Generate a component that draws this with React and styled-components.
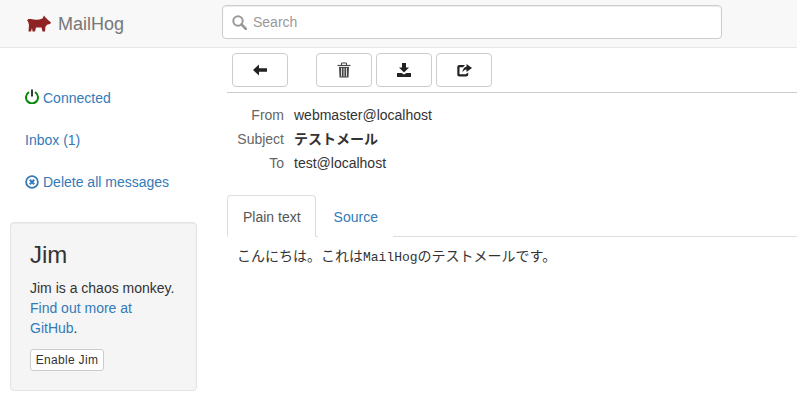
import React from 'react'
import styled, { createGlobalStyle } from 'styled-components'

const GlobalStyle = createGlobalStyle`
  html, body { margin:0; padding:0; background:#fff; }
  body {
    font-family:"Liberation Sans", Arial, "Noto Sans CJK JP", sans-serif;
    font-size:14px;
    line-height:20px;
    color:#333;
  }
  * { box-sizing:border-box; }
`

const Page = styled.div`
  width:797px;
  height:408px;
  overflow:hidden;
`
const Navbar = styled.div`
  height:48px;
  display:flex;
  align-items:center;
  background-color:#f8f8f8;
  border-bottom:1px solid #e7e7e7;
`
const Brand = styled.div`
  width:222px;
  padding-left:27px;
  display:flex;
  align-items:center;
  gap:7px;
  font-size:18px;
  color:#777;
`
const SearchBox = styled.div`
  width:500px;
  height:34px;
  margin-top:-3px;
  display:flex;
  align-items:center;
  gap:6px;
  padding-left:9px;
  background:#fff;
  border:1px solid #ccc;
  border-radius:4px;
  box-shadow:inset 0 1px 1px rgba(0,0,0,.075);
  color:#999;
`
const Columns = styled.div`
  display:flex;
`
const Sidebar = styled.div`
  width:227px;
  flex:none;
  padding:40px 30px 0 10px;
`
const NavList = styled.div`
  display:flex;
  flex-direction:column;
  gap:22px;
  padding-left:15px;
`
const NavLink = styled.a`
  display:flex;
  align-items:center;
  gap:4px;
  height:20px;
  color:#337ab7;
`
const Well = styled.div`
  width:187px;
  height:169px;
  margin-top:30px;
  padding:19px;
  background-color:#f5f5f5;
  border:1px solid #e3e3e3;
  border-radius:4px;
  box-shadow:inset 0 1px 1px rgba(0,0,0,.05);
`
const WellTitle = styled.div`
  font-size:24px;
  line-height:26px;
  margin:0 0 10px;
  color:#333;
`
const WellText = styled.div`
  margin-bottom:11px;
`
const Link = styled.a`
  color:#337ab7;
`
const SmallButton = styled.button`
  display:block;
  width:74px;
  height:22px;
  padding:0;
  font:12px/18px "Liberation Sans", Arial, sans-serif;
  letter-spacing:.3px;
  color:#333;
  background:#fff;
  border:1px solid #ccc;
  border-radius:3px;
`
const Main = styled.div`
  flex:1;
  min-width:0;
`
const Toolbar = styled.div`
  display:flex;
  height:45px;
  padding:5px 0 0 5px;
  border-bottom:1px solid #ccc;
`
const ToolButton = styled.button`
  width:56px;
  height:34px;
  margin-left:${props => props.gap}px;
  display:flex;
  align-items:center;
  justify-content:center;
  padding:0;
  background:#fff;
  border:1px solid #ccc;
  border-radius:4px;
`
const Headers = styled.div`
  padding-top:10px;
  display:grid;
  grid-template-columns:57px 1fr;
  column-gap:10px;
  grid-auto-rows:24px;
  align-items:center;
`
const Label = styled.div`
  text-align:right;
  color:#666;
`
const Value = styled.div`
  font-weight:${props => props.bold ? 'bold' : 'normal'};
`
const Tabs = styled.div`
  display:flex;
  height:42px;
  margin-top:20px;
  border-bottom:1px solid #ddd;
`
const Tab = styled.a`
  height:42px;
  padding:11px 14px 10px 15px;
  margin-right:2px;
  color:${props => props.active ? '#555' : '#337ab7'};
  background:#fff;
  border:1px solid ${props => props.active ? '#ddd' : 'transparent'};
  border-bottom-color:${props => props.active ? '#fff' : 'transparent'};
  border-radius:4px 4px 0 0;
`
const Body = styled.div`
  padding:9px 0 0 10px;
`
const Mono = styled.span`
  font-family:"Liberation Mono", "Courier New", monospace;
  font-size:13px;
`
const PowerSvg = styled.svg`
  margin:-3px 0 0 0;
`

const Hog = () => (
  <svg width="24" height="17" viewBox="0 0 24 17" fill="#8f2222">
    <path d="M0 5.5 L1.5 4 L4 4 C8 5 12 5 15.5 3.5 L17 0.5 L18.5 2.5 L20.5 4.5 L24 7.5 L23 9 L20.5 9.5 L18.5 11.5 L18 16.5 L15.5 16.5 L14.5 12.5 L9 12.5 L8 16.5 L5.5 16.5 L5 13 L4 16.5 L1.5 16.5 L2 10 L1 6.5 Z" />
  </svg>
)

const SearchIcon = () => (
  <svg width="15" height="15" viewBox="0 0 15 15" fill="none" stroke="#999" strokeWidth="2">
    <circle cx="6" cy="6" r="4.7" />
    <path d="M9.5 9.5 L14 14" strokeWidth="2.6" strokeLinecap="round" />
  </svg>
)

const PowerIcon = () => (
  <PowerSvg width="14" height="15" viewBox="0 0 14 15" fill="none" stroke="#0a8a0a" strokeWidth="2">
    <path d="M4 3.2 A6 6 0 1 0 10 3.2" />
    <path d="M7 0.5 V7.5" stroke="#222" strokeWidth="1.8" />
  </PowerSvg>
)

const RemoveIcon = () => (
  <svg width="14" height="14" viewBox="0 0 14 14">
    <circle cx="7" cy="7" r="5.9" fill="none" stroke="#337ab7" strokeWidth="1.8" />
    <path d="M4.8 4.8 L9.2 9.2 M9.2 4.8 L4.8 9.2" stroke="#337ab7" strokeWidth="2" />
  </svg>
)

const BackIcon = () => (
  <svg width="14" height="12" viewBox="0 0 14 12" fill="#222">
    <path d="M0 6 L6 0.5 L6 4.2 L14 4.2 L14 7.8 L6 7.8 L6 11.5 Z" />
  </svg>
)

const TrashIcon = () => (
  <svg width="14" height="16" viewBox="0 0 14 16">
    <path d="M4.5 3 V1 H9.5 V3" fill="none" stroke="#444" strokeWidth="1" />
    <path d="M0.5 3.5 H13.5" stroke="#444" strokeWidth="1.2" />
    <path d="M2 5 H12 L11.5 15.5 H2.5 Z" fill="#444" />
    <path d="M4.5 6 V14.5 M7 6 V14.5 M9.5 6 V14.5" stroke="#ddd" strokeWidth="1" />
  </svg>
)

const DownloadIcon = () => (
  <svg width="14" height="14" viewBox="0 0 14 14" fill="#222">
    <path d="M5 0 H9 V4.5 H12 L7 9.5 L2 4.5 H5 Z M0 10 H4.5 L7 11.5 L9.5 10 H14 V14 H0 Z" />
  </svg>
)

const ShareIcon = () => (
  <svg width="15" height="13" viewBox="0 0 15 13" fill="#222">
    <path d="M8 1 H2.5 C1 1 0.3 1.7 0.3 3.2 V10.3 C0.3 11.8 1 12.5 2.5 12.5 H9 C10.5 12.5 11.2 11.8 11.2 10.3 V8.5 L9 10 V10.3 H2.5 V3.2 H6 Z" />
    <path d="M9.5 0 L15 4 L9.5 8 V5.6 C7.8 5.6 6.4 6.6 5.5 8.5 C5.5 5.2 7.2 3 9.5 2.7 Z" />
  </svg>
)

export default function App() {
  return (
    <Page>
      <GlobalStyle />
      <Navbar>
        <Brand><Hog />MailHog</Brand>
        <SearchBox><SearchIcon />Search</SearchBox>
      </Navbar>
      <Columns>
        <Sidebar>
          <NavList>
            <NavLink><PowerIcon />Connected</NavLink>
            <NavLink>Inbox (1)</NavLink>
            <NavLink><RemoveIcon />Delete all messages</NavLink>
          </NavList>
          <Well>
            <WellTitle>Jim</WellTitle>
            <WellText>
              Jim is a chaos monkey.<br />
              <Link>Find out more at</Link><br />
              <Link>GitHub</Link>.
            </WellText>
            <SmallButton>Enable Jim</SmallButton>
          </Well>
        </Sidebar>
        <Main>
          <Toolbar>
            <ToolButton gap={0}><BackIcon /></ToolButton>
            <ToolButton gap={28}><TrashIcon /></ToolButton>
            <ToolButton gap={4}><DownloadIcon /></ToolButton>
            <ToolButton gap={4}><ShareIcon /></ToolButton>
          </Toolbar>
          <Headers>
            <Label>From</Label>
            <Value>webmaster@localhost</Value>
            <Label>Subject</Label>
            <Value bold>テストメール</Value>
            <Label>To</Label>
            <Value>test@localhost</Value>
          </Headers>
          <Tabs>
            <Tab active>Plain text</Tab>
            <Tab>Source</Tab>
          </Tabs>
          <Body>こんにちは。これは<Mono>MailHog</Mono>のテストメールです。</Body>
        </Main>
      </Columns>
    </Page>
  )
}
